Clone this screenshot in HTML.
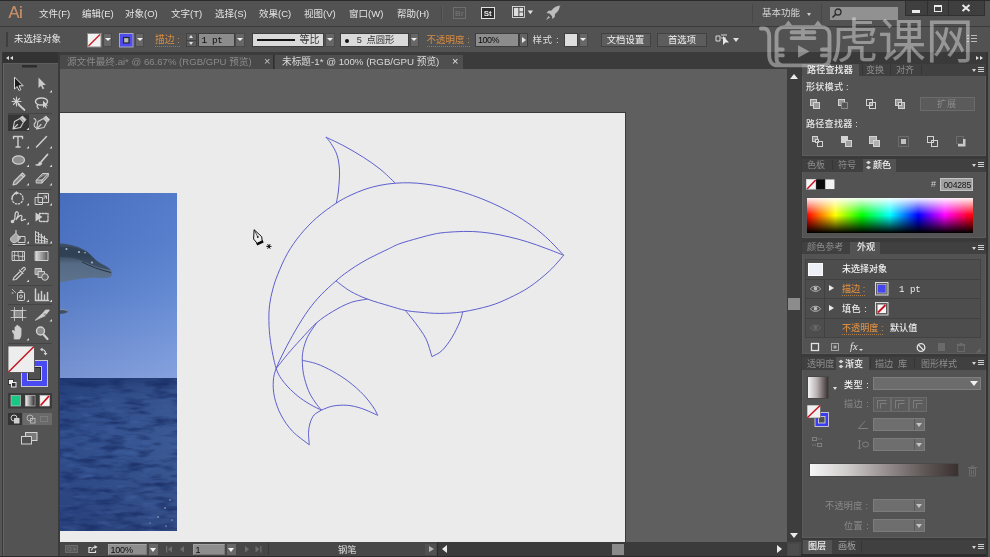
<!DOCTYPE html>
<html lang="zh-CN">
<head>
<meta charset="utf-8">
<title>Adobe Illustrator</title>
<style>
*{box-sizing:border-box;margin:0;padding:0}
html,body{width:990px;height:557px;overflow:hidden;background:#535353}body{will-change:transform}
body{position:relative;font-family:"Liberation Sans","Noto Sans CJK SC",sans-serif;font-size:11px;color:#dcdcdc;line-height:1}
.a{position:absolute}
.t{position:absolute;white-space:nowrap}
/* ---------- top bars ---------- */
#topline{left:0;top:0;width:990px;height:1px;background:#2b2b2b}
#menubar{left:0;top:1px;width:990px;height:25px;background:#525252}
#menuline{left:0;top:26px;width:990px;height:1px;background:#3a3a3a}
#ctrlbar{left:0;top:27px;width:990px;height:25px;background:#525252}
#tabrow{left:0;top:52px;width:990px;height:17px;background:#3b3b3b}
.mi{position:absolute;top:9px;font-size:9.5px;color:#e4e4e4;white-space:nowrap;letter-spacing:0}
.or{color:#d98d42;border-bottom:1px dotted rgba(217,141,66,.6)}
.dd{position:absolute;background:#676767;border:1px solid #4a4a4a}
.dd:after{content:"";position:absolute;left:50%;top:50%;margin:-1.500px 0 0 -3px;border:3px solid transparent;border-top:3.800px solid #f0f0f0;border-bottom:0}
/* ---------- canvas ---------- */
#canvas{left:60px;top:69px;width:727px;height:473px;background:#5f5f5f;overflow:hidden}
#artboard{left:0;top:44px;width:565px;height:430px;background:#ebebeb}
/* ---------- tools ---------- */
#toolhead{left:3px;top:52px;width:55px;height:10.500px;background:#333}
#tools{left:3px;top:62.500px;width:55px;height:493px;background:#535353;border-left:1px solid #626262;border-top:1px solid #5e5e5e}
/* ---------- right ---------- */
#vscroll{left:787px;top:69px;width:14px;height:473px;background:#3d3d3d}
#rpanel{left:801px;top:62px;width:185px;height:495px;background:#3b3b3b}
.pn{position:absolute;left:3px;width:179px;background:#535353}
.ptabs{position:absolute;left:3px;width:179px;height:14px;background:#424242}
.ptab{position:absolute;top:0;height:14px;font-size:10.5px;color:#9a9a9a;padding:2px 0 0 0;text-align:center}
.ptab.on{background:#535353;color:#efefef}
#status{left:60px;top:542px;width:741px;height:14px;background:#3f3f3f}
</style>
</head>
<body>
<div class="a" id="menubar"></div>
<div class="a" id="topline"></div>
<div class="a" id="menuline"></div>
<div class="a" id="ctrlbar"></div>
<div class="a" id="tabrow"></div>


<!-- ===== MENU BAR ===== -->
<div class="t" style="left:8.500px;top:3.500px;font-size:16.500px;color:#c08c68;letter-spacing:-0.6px;text-shadow:0 0 .6px #c08c68">Ai</div>
<div class="mi" style="left:39px">文件(F)</div>
<div class="mi" style="left:82px">编辑(E)</div>
<div class="mi" style="left:125px">对象(O)</div>
<div class="mi" style="left:171px">文字(T)</div>
<div class="mi" style="left:215px">选择(S)</div>
<div class="mi" style="left:259px">效果(C)</div>
<div class="mi" style="left:304px">视图(V)</div>
<div class="mi" style="left:349px">窗口(W)</div>
<div class="mi" style="left:397px">帮助(H)</div>
<div class="a" style="left:441px;top:6px;width:1px;height:15px;background:#484848"></div>
<div class="a" style="left:442px;top:6px;width:1px;height:15px;background:#5c5c5c"></div>
<div class="t" style="left:453px;top:6.500px;width:13px;height:12.500px;border:1px solid #6e6e6e;font-size:8px;font-weight:bold;color:#6e6e6e;text-align:center;line-height:11px">Br</div>
<div class="t" style="left:481px;top:6.500px;width:13.500px;height:12.500px;border:1px solid #e2e2e2;background:#2e2e2e;font-size:8px;font-weight:bold;color:#e8e8e8;text-align:center;line-height:11px">St</div>
<svg class="a" style="left:511.500px;top:6px" width="22" height="12.800" viewBox="0 0 24 14"><rect x="0.5" y="0.5" width="13" height="12" fill="#3a3a3a" stroke="#dedede"/><rect x="2" y="2" width="5" height="9" fill="#dedede"/><rect x="8" y="2" width="4" height="4" fill="#dedede"/><rect x="8" y="7" width="4" height="4" fill="#dedede"/><path d="M17 5h6l-3 4z" fill="#dedede"/></svg>
<svg class="a" style="left:544px;top:4px" width="18" height="18" viewBox="0 0 18 18"><path d="M16.5 1.5c-4 .2-7 2-9 5l-3 .3-2 2.300 3 .4 2.500 2.500.4 3 2.300-2 .3-3c3-2 4.800-5 5-9z" fill="#bdbdbd"/><path d="M4.500 12l-2.500 4 4-2.500z" fill="#bdbdbd"/></svg>
<div class="mi" style="left:762px;top:8px;color:#d6d6d6">基本功能</div>
<div class="a" style="left:807px;top:13px;border:2.5px solid transparent;border-top:3px solid #d0d0d0;border-bottom:0"></div>
<div class="a" style="left:752px;top:4px;width:1px;height:19px;background:#474747"></div>
<div class="a" style="left:821px;top:4px;width:1px;height:19px;background:#474747"></div>
<div class="a" style="left:830px;top:7px;width:67.500px;height:13px;background:#919191"></div>
<svg class="a" style="left:830px;top:7px" width="14" height="13" viewBox="0 0 14 13"><circle cx="8" cy="5" r="3" fill="none" stroke="#2c2c2c" stroke-width="1.300"/><path d="M5.800 7.200L2.500 10.500" stroke="#2c2c2c" stroke-width="1.600"/></svg>
<div class="a" style="left:905px;top:1px;width:79.500px;height:14.500px;background:#3f3f3f;border:1px solid #303030;border-top:0"></div>
<div class="a" style="left:926.500px;top:1px;width:1px;height:14px;background:#303030"></div>
<div class="a" style="left:948px;top:1px;width:1px;height:14px;background:#303030"></div>
<div class="a" style="left:912px;top:9.500px;width:8px;height:3px;background:#ececec"></div>
<div class="a" style="left:933.500px;top:5px;width:8.500px;height:7px;border:1.500px solid #ececec;border-top-width:2px"></div>
<svg class="a" style="left:961px;top:4px" width="10" height="8" viewBox="0 0 10 8"><path d="M1.500 1l7 6M8.500 1l-7 6" stroke="#ececec" stroke-width="1.900"/></svg>

<!-- ===== CONTROL BAR ===== -->
<div class="a" style="left:6px;top:32px;width:2px;height:15px;background:#3e3e3e"></div>
<div class="t" style="left:14px;top:34px;font-size:9.400px;color:#e6e6e6;letter-spacing:0">未选择对象</div>
<svg class="a" style="left:86.500px;top:32.500px" width="15" height="15" viewBox="0 0 15 15"><rect x="0.500" y="0.500" width="13.500" height="13.500" fill="#f2f2f2" stroke="#8a8a8a"/><path d="M1.500 13L13 1.500" stroke="#c8202a" stroke-width="1.500"/></svg>
<div class="dd" style="left:103px;top:32.500px;width:9px;height:14.500px"></div>
<svg class="a" style="left:118.500px;top:32.500px" width="15" height="15" viewBox="0 0 15 15"><rect x="0.500" y="0.500" width="13.500" height="13.500" fill="#4d4df2" stroke="#a8a8b8"/><rect x="4.500" y="4.500" width="5.500" height="5.500" fill="#b9b9b9" stroke="#26262a" stroke-width="1.200"/></svg>
<div class="dd" style="left:135px;top:32.500px;width:9px;height:14.500px"></div>
<div class="t or" style="left:155px;top:35px;font-size:9.700px;padding-bottom:1px">描边 :</div>
<div class="a" style="left:186px;top:32.500px;width:10.500px;height:14.500px;background:#5e5e5e;border:1px solid #424242"></div><div class="a" style="left:187px;top:39.500px;width:8.500px;height:1px;background:#424242"></div>
<div class="a" style="left:188.700px;top:34.500px;border:2.500px solid transparent;border-bottom:3.500px solid #e0e0e0;border-top:0"></div>
<div class="a" style="left:188.700px;top:42px;border:2.500px solid transparent;border-top:3.500px solid #e0e0e0;border-bottom:0"></div>
<div class="t" style="left:198px;top:32.500px;width:36.500px;height:14.500px;background:#8c8c8c;border:1px solid #3e3e3e;color:#0e0e0e;font-family:'Liberation Mono',monospace;font-size:9.300px;padding:2px 0 0 2.500px;letter-spacing:-.3px">1 pt</div>
<div class="dd" style="left:235px;top:32.500px;width:10px;height:14.500px"></div>
<div class="a" style="left:252px;top:32.500px;width:71.500px;height:14.500px;background:#dadada;border:1px solid #3e3e3e"></div>
<div class="a" style="left:257px;top:38.700px;width:37.500px;height:2.300px;background:#151515"></div>
<div class="t" style="left:299.500px;top:35px;font-size:10px;color:#3a3a3a">等比</div>
<div class="dd" style="left:324.500px;top:32.500px;width:10px;height:14.500px"></div>
<div class="a" style="left:340px;top:32.500px;width:69px;height:14.500px;background:#dadada;border:1px solid #3e3e3e"></div>
<div class="a" style="left:345px;top:39px;width:4px;height:4px;border-radius:2px;background:#111"></div>
<div class="t" style="left:356.500px;top:35.500px;font-size:9.300px;color:#333;font-family:'Liberation Mono','Noto Sans CJK SC',monospace">5</div><div class="t" style="left:366.500px;top:35.500px;font-size:9.300px;color:#333">点圆形</div>
<div class="dd" style="left:409.500px;top:32.500px;width:9.500px;height:14.500px"></div>
<div class="t or" style="left:426.500px;top:35px;font-size:9.500px;padding-bottom:1px">不透明度 :</div>
<div class="t" style="left:475px;top:32.500px;width:44px;height:14.500px;background:#8c8c8c;border:1px solid #3e3e3e;color:#0e0e0e;font-size:9px;padding:2px 0 0 2px;letter-spacing:-0.500px">100%</div>
<div class="a" style="left:519px;top:32.500px;width:9px;height:14.500px;background:#636363;border:1px solid #3e3e3e"></div>
<div class="a" style="left:522px;top:37px;border:3px solid transparent;border-left:4px solid #e6e6e6;border-right:0"></div>
<div class="t" style="left:532.500px;top:35px;font-size:9.500px;color:#dedede;letter-spacing:.6px">样式 :</div>
<div class="a" style="left:564px;top:32.500px;width:14px;height:14.500px;background:#dedede;border:1px solid #3e3e3e"></div>
<div class="dd" style="left:578.500px;top:32.500px;width:9.500px;height:14.500px"></div>
<div class="t" style="left:600.500px;top:32.500px;width:50px;height:14.500px;background:#5d5d5d;border:1px solid #414141;color:#f0f0f0;font-size:9.300px;text-align:center;padding-top:2px;letter-spacing:.1px">文档设置</div>
<div class="t" style="left:657px;top:32.500px;width:50px;height:14.500px;background:#5d5d5d;border:1px solid #414141;color:#f0f0f0;font-size:9.300px;text-align:center;padding-top:2px;letter-spacing:.1px">首选项</div>
<svg class="a" style="left:715px;top:32.500px" width="26" height="14" viewBox="0 0 26 14"><path d="M1 3h4v5h-4zM6 2h6M6 5h5" stroke="#d8d8d8" fill="none"/><path d="M8 3l0 9 2.500-2.500 3.500 0z" fill="#e8e8e8"/><path d="M18 5h6l-3 4z" fill="#dedede"/></svg>
<div class="a" style="left:967px;top:35px;width:2px;height:1px;background:#bbb;box-shadow:0 3px #bbb,0 6px #bbb,4px 0 #bbb,6px 0 #bbb,8px 0 #bbb,4px 3px #bbb,6px 3px #bbb,8px 3px #bbb,4px 6px #bbb,6px 6px #bbb,8px 6px #bbb"></div>

<!-- ===== TAB ROW ===== -->
<div class="a" style="left:60px;top:54.500px;width:214px;height:14.500px;background:#494949;border-right:1px solid #2f2f2f"></div>
<div class="t" style="left:67px;top:57px;font-size:9.600px;color:#8a8a8a">源文件最终.ai* @ 66.67% (RGB/GPU 预览)</div>
<div class="t" style="left:264px;top:55.500px;font-size:11px;color:#c4c4c4">×</div>
<div class="a" style="left:275px;top:54.500px;width:187.500px;height:14.500px;background:#4f4f4f"></div>
<div class="t" style="left:282px;top:57px;font-size:9.700px;color:#dadada">未标题-1* @ 100% (RGB/GPU 预览)</div>
<div class="t" style="left:452px;top:55.500px;font-size:11px;color:#e6e6e6">×</div>

<div class="a" id="canvas">
  <div class="a" style="left:0;top:43px;width:566px;height:431px;background:#3a3a3a"></div>
  <div class="a" id="artboard"></div>
  <!-- photo -->
  <div class="a" id="photo" style="left:0;top:124px;width:117px;height:338px;overflow:hidden;background:linear-gradient(90deg,rgba(0,0,50,.07),rgba(255,255,255,.04)),linear-gradient(180deg,#4c76c8 0,#527bcb 50px,#5d85d1 97px,#7193d8 147px,#819edd 185.500px,#1f3a76 185.500px,#27447f 192px,#2f4e8c 205px,#335391 250px,#2f4c89 300px,#29447f 338px)">
    <svg class="a" style="left:0;top:0" width="118" height="338" viewBox="60 193 118 338">
      <defs>
        <filter id="sea" x="0" y="0" width="100%" height="100%" color-interpolation-filters="sRGB"><feTurbulence type="fractalNoise" baseFrequency="0.040 0.160" numOctaves="3" seed="7"/><feColorMatrix type="matrix" values="0 0 0 0 0.100  0 0 0 0 0.180  0 0 0 0 0.400  0 0 0 2.400 -1.050"/></filter><filter id="sea2" x="0" y="0" width="100%" height="100%" color-interpolation-filters="sRGB"><feTurbulence type="fractalNoise" baseFrequency="0.050 0.200" numOctaves="2" seed="23"/><feColorMatrix type="matrix" values="0 0 0 0 0.250  0 0 0 0 0.370  0 0 0 0 0.630  0 0 0 2.000 -1.100"/></filter>
        <linearGradient id="dol" x1="0" y1="0" x2="0" y2="1"><stop offset="0" stop-color="#3e4e63"/><stop offset=".3" stop-color="#394a5f"/><stop offset=".52" stop-color="#556a84"/><stop offset="1" stop-color="#5d738e"/></linearGradient>
      </defs>
      <rect x="60" y="378.500" width="118" height="153" filter="url(#sea)" opacity=".9"/><rect x="60" y="390" width="118" height="141" filter="url(#sea2)"/>
      <path d="M60 243.500C70 244 80 247 87 251.500C91 254.500 94 258.500 97 261.500C101 264 107 267 110 269.500C112.800 271.500 112.800 276 109.500 277.500C104 278.500 96 277.500 88 278C78 278.500 68 281 60 282.500z" fill="url(#dol)"/>
      <path d="M60 247c8-1 20 1 27 5.500 5 4 9 8 14 11 4 2 8 4 10 6.500-8-1.500-18-4-26-8-8-4-17-5.500-25-5z" fill="#2c3a4c" opacity=".6"/>
      <path d="M82 262c8 4 18 8 29 10.500" stroke="#27323f" stroke-width="1" fill="none"/>
      <g fill="#cfdbe6" opacity=".8"><circle cx="66.500" cy="249" r="1"/><circle cx="79" cy="252" r="1.100"/><circle cx="85" cy="252.700" r=".8"/><circle cx="92" cy="262.500" r="1"/></g>
      <path d="M60 309.500c3-.5 6.500 0 8.500 2-2 1.500-5.500 2.500-8.500 2.500z" fill="#3f4f64"/><path d="M60 309.800c3-.5 6-.2 8 1.500" stroke="#9aa8b8" stroke-width=".8" fill="none"/>
      <g fill="#dfe6f2" opacity=".7"><circle cx="165" cy="508" r=".8"/><circle cx="170" cy="500" r=".7"/><circle cx="158" cy="517" r=".8"/><circle cx="172" cy="520" r=".7"/><circle cx="150" cy="523" r=".6"/><circle cx="166" cy="526" r=".7"/></g>
    </svg>
  </div>
  <svg class="a" style="left:-60px;top:-69px" width="990" height="557" viewBox="0 0 990 557"><g fill="none" stroke="#5656cc" stroke-width=".950">
<path d="M321.4 410.1C319.5 409.2 314.1 406.8 310.1 404.4C306.1 402.0 301.5 399.2 297.2 395.6C292.9 392.0 287.7 387.1 284.2 382.6C280.7 378.1 278.5 375.4 276.2 368.5C273.9 361.6 271.7 349.4 270.5 341.4C269.3 333.4 269.0 326.6 268.9 320.4C268.8 314.2 269.0 309.4 269.7 304.2C270.4 298.9 271.5 293.9 272.9 288.9C274.2 283.9 275.4 280.2 277.8 274.3C280.2 268.4 283.7 259.9 287.5 253.3C291.3 246.7 295.5 240.6 300.4 234.7C305.2 228.8 310.7 223.0 316.6 217.8C322.5 212.6 330.4 207.0 336.0 203.3C341.6 199.6 345.2 197.8 350.0 195.5C354.8 193.2 360.0 191.0 365.0 189.3C370.0 187.6 374.9 186.3 380.0 185.3C385.1 184.3 390.4 183.6 395.4 183.2C400.4 182.8 405.1 182.7 410.0 182.8C414.9 182.9 420.0 183.4 425.0 184.0C430.0 184.6 435.0 185.4 440.0 186.4C445.0 187.4 449.6 188.4 455.0 189.9C460.4 191.4 466.7 193.3 472.7 195.4C478.7 197.5 484.8 199.9 490.9 202.6C497.0 205.3 503.0 208.2 509.1 211.5C515.2 214.8 521.2 218.4 527.3 222.6C533.4 226.8 539.4 231.2 545.5 236.7C551.6 242.1 560.7 252.2 563.7 255.3"/>
<path d="M563.7 255.3C560.7 254.1 551.6 250.4 545.5 248.2C539.4 245.9 533.4 243.7 527.3 241.8C521.2 239.9 515.2 238.3 509.1 236.9C503.0 235.5 497.0 234.2 490.9 233.3C484.8 232.4 478.8 231.8 472.7 231.5C466.6 231.2 460.6 231.5 454.5 231.8C448.4 232.2 442.4 232.5 436.4 233.6C430.3 234.7 424.3 236.5 418.2 238.2C412.1 239.9 404.8 241.9 400.0 243.6C395.2 245.3 395.1 245.7 389.3 248.5C383.5 251.3 372.0 256.7 365.0 260.6C358.0 264.5 352.1 268.5 347.3 271.9C342.5 275.3 340.3 277.1 336.0 280.9C331.7 284.7 326.0 289.7 321.4 294.5C316.8 299.3 312.8 304.0 308.5 309.9C304.2 315.8 299.7 323.2 295.6 330.1C291.6 337.0 287.4 344.7 284.2 351.1C281.0 357.5 278.0 363.5 276.2 368.5C274.4 373.5 273.6 376.2 273.3 381.0C273.0 385.8 273.2 391.5 274.5 397.2C275.8 402.9 278.0 409.4 281.0 415.0C284.0 420.6 287.6 426.1 292.3 431.1C297.0 436.1 306.5 442.5 309.3 444.8"/>
<path d="M563.7 255.3C561.3 257.9 555.2 265.6 549.5 270.9C543.8 276.2 536.2 282.4 529.6 286.9C523.0 291.4 516.2 294.6 509.6 297.8C503.0 301.0 497.5 303.5 489.7 305.8C481.9 308.1 471.1 310.5 462.8 311.8C454.5 313.1 447.0 313.3 439.9 313.4C432.8 313.5 425.7 312.7 419.9 312.2C414.1 311.7 410.4 311.4 405.3 310.4C400.2 309.3 395.6 307.8 389.3 305.9C383.0 304.0 374.0 301.5 367.5 299.1C361.0 296.7 355.8 294.3 350.5 291.3C345.2 288.3 338.4 282.6 336.0 280.9"/>
<path d="M367.5 299.1C364.7 299.7 356.3 300.5 350.5 302.6C344.7 304.7 338.3 308.1 332.7 311.5C327.1 314.9 322.0 318.1 316.6 322.8C311.2 327.5 305.2 334.6 300.4 339.8C295.5 345.1 291.5 349.5 287.5 354.3C283.5 359.1 278.1 366.1 276.2 368.5"/>
<path d="M316.6 322.8C315.1 325.1 309.9 332.2 307.7 336.6C305.5 341.1 304.2 345.6 303.3 349.5C302.4 353.4 302.2 356.1 302.3 360.3C302.4 364.5 302.6 369.4 303.6 374.5C304.6 379.6 306.6 386.1 308.5 390.7C310.4 395.3 312.9 398.8 315.0 402.0C317.1 405.2 320.3 408.8 321.4 410.1"/>
<path d="M302.3 360.3C304.7 360.9 311.5 362.0 316.6 363.8C321.7 365.6 327.3 368.3 332.7 371.3C338.1 374.3 343.8 377.9 348.9 381.8C354.0 385.7 359.4 390.5 363.4 394.7C367.4 398.9 370.7 403.5 373.1 406.9C375.5 410.3 376.9 413.9 377.7 415.3"/>
<path d="M321.4 410.1C323.3 409.4 328.4 406.9 332.7 406.1C337.0 405.3 342.4 404.9 347.3 405.3C352.2 405.7 356.7 406.8 361.8 408.5C366.9 410.2 375.1 414.2 377.7 415.3"/>
<path d="M309.3 444.8C309.2 442.8 308.4 436.3 308.5 432.7C308.6 429.1 309.2 425.9 310.1 423.0C311.0 420.1 312.2 417.1 314.1 415.0C316.0 412.9 320.2 410.9 321.4 410.1"/>
<path d="M336.3 203.0C336.7 200.8 338.0 195.5 338.5 190.0C339.0 184.5 339.8 176.0 339.5 170.2C339.2 164.4 338.4 159.4 337.0 155.0C335.6 150.6 332.9 146.5 331.0 143.5C329.1 140.5 326.8 138.2 325.9 137.1"/>
<path d="M325.9 137.1C329.1 138.7 338.8 143.1 345.0 146.5C351.2 149.9 357.6 153.6 363.4 157.3C369.2 161.1 374.7 164.7 380.0 169.0C385.3 173.3 392.8 180.8 395.4 183.2"/>
<path d="M405.3 310.4C407.1 312.6 412.5 319.0 415.9 323.7C419.3 328.4 423.2 333.2 425.9 338.7C428.6 344.2 430.9 353.6 431.9 356.6"/>
<path d="M431.9 356.6C433.6 355.6 438.6 353.9 441.9 350.7C445.2 347.5 448.8 342.5 451.8 337.7C454.8 332.9 458.0 326.1 459.8 321.8C461.6 317.5 462.3 313.5 462.8 311.8"/>
</g></svg>
  <!-- pen cursor -->
  <svg class="a" style="left:190px;top:157px" width="24" height="24" viewBox="250 226 24 24"><path d="M254.100 229.700L261.700 236.700L262.200 241L257.300 243.600L253.600 239z" fill="#ededed" stroke="#111" stroke-width="1"/><path d="M256.700 244.300L263.200 241.300" stroke="#0a0a0a" stroke-width="2.400"/><circle cx="257.800" cy="237" r=".9" fill="#111"/><path d="M254.300 230l3.300 6.500" stroke="#111" stroke-width=".7"/><path d="M266.300 246.400h5.200M267.600 244.100l2.600 4.600M270.200 244.100l-2.600 4.600" stroke="#111" stroke-width="1"/></svg>
</div>

<div class="a" style="left:58px;top:52px;width:2px;height:505px;background:#3a3a3a"></div>
<div class="a" id="toolhead"></div>
<div class="a" style="left:6px;top:55.500px;border:2.500px solid transparent;border-right:3.500px solid #e0e0e0;border-left:0"></div><div class="a" style="left:9.500px;top:55.500px;border:2.500px solid transparent;border-right:3.500px solid #e0e0e0;border-left:0"></div>
<div class="a" style="left:0;top:52px;width:2px;height:505px;background:#555"></div><div class="a" style="left:2px;top:52px;width:1px;height:505px;background:#393939"></div>
<div class="a" id="tools"></div>

<!-- ===== TOOLS PANEL ===== -->
<svg class="a" style="left:0;top:60px" width="60" height="400" viewBox="0 60 60 400">
<g fill="none" stroke="#cfcfcf" stroke-width="1.200" stroke-linecap="round" stroke-linejoin="round">
<rect x="22" y="65" width="15" height="2.500" fill="#2d2d2d" stroke="none"/>
<!-- row1: selection / direct selection -->
<path d="M14.500 77.500v11.500l2.700-2.500 1.800 4 1.800-.8-1.800-3.900h3.800z" fill="#1b1b1b" stroke="#dcdcdc" stroke-width="1"/>
<path d="M38.500 77.500v10.500l2.500-2.300 1.700 3.600 1.500-.7-1.700-3.500h3.400z" fill="#c9c9c9" stroke="none"/>
<!-- row2: magic wand / lasso -->
<path d="M18.500 104.500l6 5.500" stroke-width="1.700"/><path d="M16.500 97v9M12 101.500h9M13.500 98.500l6 6M19.500 98.500l-6 6" stroke-width="1.100"/>
<ellipse cx="41.500" cy="101.500" rx="6" ry="3.600" stroke-width="1.500"/><path d="M38 104.500c-1.500 1.500-1 3 .5 4" stroke-width="1.300"/><path d="M43 100.500v7.500l1.800-1.700 1.200 2.300 1-.5-1.200-2.300h2.300z" fill="#cfcfcf" stroke="none"/>
<!-- row3: pen (active) / curvature -->
<rect x="8" y="114.500" width="21" height="16.500" fill="#363636" stroke="none"/>
<path d="M13 129l1.500-7.500 5.500-3 3.500 3.500-3 5.500zM13 129l4.500-4.500" stroke-width="1.100"/><path d="M20.500 117.500l2-1.500 3.500 3.500-1.500 2z" fill="#cfcfcf" stroke-width=".8"/>
<path d="M36.500 129l1.500-7.500 5.500-3 3.500 3.500-3 5.500zM36.500 129l4.500-4.500" stroke-width="1.100"/><path d="M44 117.500l2-1.500 3.500 3.500-1.500 2z" fill="#cfcfcf" stroke-width=".8"/><path d="M34 118.500c2.500 1 2.500 3 1 4.500s-1 3.500.5 4.500" stroke-width="1.100"/>
<!-- row4: type / line -->
<path d="M13.500 138.500v-2h9v2M18 136.500v10.500M16 147h4" stroke-width="1.400"/>
<path d="M36.500 147l10-10.500" stroke-width="1.500"/>
<!-- row5: ellipse / brush -->
<ellipse cx="18.500" cy="160" rx="6" ry="4.200" fill="#8e8e8e" stroke-width="1.200"/>
<path d="M47.500 154.500l-6.500 7.500" stroke-width="1.800"/><path d="M36 165c2-.3 3-1.500 3.500-3l2.500 1.500c-.8 1.800-3 2.500-6 1.500z" fill="#cfcfcf" stroke-width=".8"/>
<!-- row6: pencil / eraser -->
<path d="M13 185l1-3.500 7-7 2.500 2.500-7 7zM21 174.500l1.500-1.500 2.500 2.500-1.500 1.500" stroke-width="1.100" fill="#8a8a8a"/>
<path d="M36.500 180l6-6.500h6l-.5 3-6 6.500h-5.500zM36.500 180h5.500l6-6.500M42 180v3" stroke-width="1" fill="#8a8a8a"/>
<!-- row7: rotate / scale -->
<circle cx="17.500" cy="198.500" r="5.500" stroke-dasharray="1.300 1.800" stroke-width="1.300"/><path d="M12 198.500a5.500 5.500 0 0 1 5.500-5.500" stroke-width="1.300"/><path d="M17 191l-2.800 2 2.800 2z" fill="#cfcfcf" stroke="none"/>
<rect x="35.500" y="197.500" width="7" height="7" stroke-width="1"/><rect x="38.500" y="193.500" width="10" height="9" stroke-width="1"/><path d="M44 196h2.500v2.500M46.500 196l-3 3" stroke-width="1"/>
<!-- row8: warp / free transform -->
<path d="M12 222c2-1 3-3 3-6s1-5 2.500-4 0 5-1.500 7.500c2-2.500 4-5 5.500-4s-1 4 0 5 2.500-2 4-1" stroke-width="1.300"/><circle cx="12.500" cy="221.500" r="1.200" fill="#cfcfcf"/>
<rect x="39.500" y="213.500" width="8.500" height="8" stroke-dasharray="1.500 1.300" stroke-width="1.300"/><path d="M35.500 212.500v9l7-4.500z" fill="#cfcfcf" stroke="none"/>
<!-- row9: shape builder / perspective grid -->
<path d="M16 233.500l4.500 4.500-3.500 3.500c-1.500 1.500-4 1.500-5.500 0s-1-3.500 0-4.500z" fill="#a8a8a8" stroke-width="1"/><path d="M16 233.500v-3" stroke-width="1.200"/><rect x="18.500" y="236.500" width="6.500" height="6" stroke-width="1"/><path d="M13 244.500h12" stroke-width="1.200"/>
<path d="M35.500 231.500v11.500h12M38.500 232.500v10M41.500 234v9M44.500 236v7M35.500 235.500l12 4M35.500 239.500l12 2M35.500 231.500l12 8.500" stroke-width="1"/>
<!-- row10: mesh / gradient -->
<rect x="12.500" y="251.500" width="12" height="9" stroke-width="1"/><path d="M12.500 256c4-2 8 2 12 0M18.500 251.500c-2 3 2 6 0 9M14.500 251.500c1 3-1 6 0 9M22.500 251.500c1 3-1 6 0 9" stroke-width=".9"/>
<rect x="35.500" y="251.500" width="12.500" height="9" fill="url(#tg)" stroke-width="1"/>
<!-- row11: eyedropper / blend -->
<path d="M13 280l1-2.500 6.500-6.500 2 2-6.500 6.500zM19.500 270l3.500 3.500M21.500 269.500l2-2c.8-.8 2.500 1 1.700 1.800l-2 2" stroke-width="1.100"/>
<rect x="35.500" y="268.500" width="6" height="6" fill="#9a9a9a" stroke-width="1"/><rect x="38.500" y="271.500" width="6" height="6" fill="#777" stroke-width="1"/><circle cx="45" cy="277" r="3.300" fill="#666" stroke-width="1"/>
<!-- row12: symbol sprayer / graph -->
<rect x="17.500" y="292.500" width="7" height="8" rx="1" stroke-width="1"/><circle cx="21" cy="296.500" r="1.500" stroke-width="1"/><path d="M20 292.500v-2h2v2M12.500 289.500l1 1M14.500 291.500l1 1M12 293h1" stroke-width="1"/>
<path d="M35.500 289v11.500h13M38.500 300v-6M41.500 300v-8.500M44.500 300v-5M47.500 300v-7.500" stroke-width="1.500"/>
<!-- row13: artboard / slice -->
<rect x="14.500" y="310.500" width="8" height="7" fill="#8a8a8a" stroke-width="1"/><path d="M11 310.500h15M11 317.500h15M14.500 307.500v13M22.500 307.500v13" stroke-width=".8"/>
<path d="M35.500 320l7-6.500 2.500 2zM43 313l2.500-3h4l-3 4z" fill="#cfcfcf" stroke-width=".8"/>
<!-- row14: hand / zoom -->
<path d="M14 334c-1-1.500-2-3-1.500-3.500s2 .5 2.500 1.500v-4.500c0-1 1.500-1 1.500 0v-1.500c0-1 1.500-1 1.500 0v1c0-1 1.500-1 1.500 0v1.500c0-1 1.500-1 1.500 0v6c0 2-1 3.500-1.500 4.500h-5z" fill="#cfcfcf" stroke-width=".8"/>
<circle cx="40.500" cy="331" r="4" fill="#8c8c8c" stroke-width="1.400"/><path d="M43.500 334.500l4 4.500" stroke-width="2.200"/>
</g>
<defs><linearGradient id="tg"><stop offset="0" stop-color="#e0e0e0"/><stop offset="1" stop-color="#555"/></linearGradient>
<linearGradient id="tg2"><stop offset="0" stop-color="#f2f2f2"/><stop offset="1" stop-color="#2a2a2a"/></linearGradient></defs>
<!-- corner triangles -->
<g fill="#d8d8d8">
<path d="M52 90v2.500h-2.500z"/><path d="M29 127.500v2.500h-2.500z"/>
<path d="M29 146v2.500h-2.500zM52 146v2.500h-2.500z"/><path d="M29 164.500v2.500h-2.500zM52 164.500v2.500h-2.500z"/>
<path d="M29 183v2.500h-2.500zM52 183v2.500h-2.500z"/><path d="M29 203v2.500h-2.500zM52 203v2.500h-2.500z"/>
<path d="M29 222v2.500h-2.500z"/><path d="M29 241v2.500h-2.500zM52 241v2.500h-2.500z"/>
<path d="M29 279.500v2.500h-2.500z"/><path d="M29 299.500v2.500h-2.500zM52 299.500v2.500h-2.500z"/>
<path d="M52 319v2.500h-2.500z"/><path d="M29 338v2.500h-2.500z"/>
</g>
<!-- separators -->
<g stroke="#444" stroke-width="1"><path d="M8 113.500h44M8 189.500h44M8 245.500h44M8 285.500h44M8 304.500h44M8 343.500h44"/></g>
<!-- fill / stroke -->
<rect x="21.500" y="360.500" width="26" height="26" fill="#4a4af2" stroke="#c9c9c9"/>
<rect x="27.500" y="366.500" width="14" height="14" fill="#505050" stroke="#d0d0d0"/><rect x="28.500" y="367.500" width="12" height="12" fill="none" stroke="#2a2a2a"/>
<rect x="8" y="346" width="26.500" height="26.500" fill="#ededed" stroke="#4a4a4a" stroke-width=".8"/>
<path d="M8.500 372L34 346.500" stroke="#c0101c" stroke-width="1.500"/>
<g fill="none" stroke="#d6d6d6" stroke-width="1.200"><path d="M41.500 349.500c2.500 0 4 1.500 4 4"/><path d="M40 349.500l2.500-2v4zM45.500 355.500l-2-2.500h4z" fill="#d6d6d6" stroke="none"/></g>
<rect x="8.500" y="379.500" width="5" height="5" fill="#f0f0f0" stroke="#222" stroke-width=".8"/><rect x="11.500" y="382.500" width="4.500" height="4.500" fill="#333" stroke="#eee" stroke-width="1"/>
<!-- color mode -->
<rect x="8" y="393" width="44" height="15.500" fill="#3a3a3a"/>
<rect x="11" y="395.500" width="9.500" height="10.500" fill="#19c784" stroke="#cfcfcf" stroke-width=".6"/>
<rect x="25.500" y="395.500" width="9.500" height="10.500" fill="url(#tg2)" stroke="#cfcfcf" stroke-width=".6"/>
<rect x="40" y="395.500" width="9.500" height="10.500" fill="#f4f4f4" stroke="#cfcfcf" stroke-width=".6"/><path d="M40.500 405.500L49 396" stroke="#d01020" stroke-width="1.800"/>
<!-- draw mode -->
<rect x="8" y="413" width="14" height="12" fill="#343434"/><rect x="22.500" y="413" width="29.500" height="12" fill="#6a6a6a"/>
<g fill="none" stroke="#d0d0d0" stroke-width="1"><circle cx="14" cy="418" r="3"/><rect x="14.500" y="418.500" width="4.500" height="4.500" fill="#cfcfcf"/><circle cx="30" cy="418" r="3" stroke="#b5b5b5"/><rect x="30.500" y="418.500" width="4.500" height="4.500" stroke="#b5b5b5"/><rect x="40.500" y="416.500" width="7" height="5" stroke="#7c7c7c"/></g>
<!-- screen mode -->
<rect x="25.500" y="432.500" width="11.500" height="8" fill="#7a7a7a" stroke="#d4d4d4"/><rect x="21.500" y="436.500" width="10" height="7.500" fill="#505050" stroke="#d4d4d4"/>
</svg>

<!-- ===== STATUS BAR / SCROLLBARS ===== -->
<div class="a" style="left:60px;top:542px;width:741px;height:13.5px;background:#474747;"></div>
<div class="a" style="left:437px;top:542px;width:350px;height:13.5px;background:#3b3b3b;"></div>
<div class="a" style="left:0px;top:555.5px;width:990px;height:1.5px;background:#2c2c2c;"></div>
<svg class="a" style="left:64px;top:544px" width="36" height="10" viewBox="64 544 36 10"><g fill="none" stroke="#6c6c6c" stroke-width="1"><rect x="65.500" y="545.500" width="12" height="7" fill="#5a5a5a"/><circle cx="69.500" cy="549" r="1.800"/><path d="M73 549h3M74.500 547.500v3"/></g><g fill="none" stroke="#e0e0e0" stroke-width="1.200"><path d="M91.500 547.500h-2.500v5h6.500v-2"/><path d="M91.500 550.500c.5-2.500 2-3.500 4-3.500"/><path d="M94.500 545l3 2-3 2z" fill="#e0e0e0" stroke="none"/></g></svg>
<div class="t" style="left:108px;top:544px;width:39px;height:11px;background:#8e8e8e;border:1px solid #a2a2a2;border-right-color:#777;border-bottom-color:#777;color:#0c0c0c;font-size:9px;padding:.5px 0 0 1.500px;letter-spacing:-.2px">100%</div>
<div class="a" style="left:148.5px;top:544px;width:9.5px;height:11px;background:#686868;"></div>
<div class="a" style="left:150px;top:548px;border:3px solid transparent;border-top:4px solid #f0f0f0;border-bottom:0"></div>
<svg class="a" style="left:164px;top:545px" width="100" height="9" viewBox="164 545 100 9"><g fill="#6e6e6e"><rect x="166" y="546" width="1.300" height="6.500"/><path d="M172 546v6.500l-4-3.250z"/><path d="M184 546v6.500l-4-3.250z"/><path d="M245 546v6.500l4-3.250z"/><path d="M255.500 546v6.500l4-3.250z"/><rect x="260.200" y="546" width="1.300" height="6.500"/></g></svg>
<div class="t" style="left:193px;top:544px;width:32px;height:11px;background:#8e8e8e;border:1px solid #a2a2a2;border-right-color:#777;border-bottom-color:#777;color:#0c0c0c;font-size:9px;padding:.5px 0 0 1.500px">1</div>
<div class="a" style="left:226.5px;top:544px;width:9.5px;height:11px;background:#686868;"></div>
<div class="a" style="left:228px;top:548px;border:3px solid transparent;border-top:4px solid #f0f0f0;border-bottom:0"></div>
<div class="a" style="left:268px;top:543px;width:1px;height:12px;background:#3a3a3a;"></div>
<div class="t" style="left:338px;top:546px;font-size:9.3px;color:#dedede;">钢笔</div>
<div class="a" style="left:424.5px;top:543.5px;width:11.5px;height:11.5px;background:#515151;"></div>
<div class="a" style="left:428.500px;top:546px;border:3.500px solid transparent;border-left:5px solid #b4b4b4;border-right:0"></div>
<div class="a" style="left:436.5px;top:542px;width:1.5px;height:13.5px;background:#2c2c2c;"></div>
<div class="a" style="left:442px;top:545px;border:4px solid transparent;border-right:5.500px solid #ececec;border-left:0"></div>
<div class="a" style="left:777px;top:545px;border:4px solid transparent;border-left:5.500px solid #ececec;border-right:0"></div>
<div class="a" style="left:612px;top:543.5px;width:12px;height:11px;background:#8a8a8a;"></div>
<div class="a" style="left:787.5px;top:543.5px;width:11.5px;height:11px;background:#4d4d4d;"></div>
<div class="a" style="left:787px;top:69px;width:14px;height:473px;background:#3d3d3d;"></div>
<div class="a" style="left:789.500px;top:73.500px;border:4.500px solid transparent;border-bottom:5px solid #ececec;border-top:0"></div>
<div class="a" style="left:789.500px;top:533px;border:4.500px solid transparent;border-top:5px solid #ececec;border-bottom:0"></div>
<div class="a" style="left:788px;top:298px;width:11.5px;height:11.5px;background:#8c8c8c;"></div>
<!-- ===== RIGHT PANELS ===== -->
<div class="a" style="left:801px;top:53px;width:189px;height:504px;background:#3a3a3a;"></div>
<div class="a" style="left:976px;top:55.500px;border:2.500px solid transparent;border-left:3.500px solid #e0e0e0;border-right:0"></div><div class="a" style="left:979.500px;top:55.500px;border:2.500px solid transparent;border-left:3.500px solid #e0e0e0;border-right:0"></div>
<div class="a" style="left:802px;top:64px;width:183.500px;height:12px;background:#404040;"></div>
<div class="a" style="left:802px;top:64px;width:57px;height:12px;background:#535353;"></div>
<div class="t" style="left:807px;top:65.5px;font-size:9.1px;color:#f0f0f0;font-weight:500;letter-spacing:.1px">路径查找器</div>
<div class="a" style="left:862px;top:65px;width:1px;height:10px;background:#353535;"></div>
<div class="a" style="left:890px;top:65px;width:1px;height:10px;background:#353535;"></div>
<div class="a" style="left:921px;top:65px;width:1px;height:10px;background:#353535;"></div>
<div class="t" style="left:866px;top:65.5px;font-size:9.1px;color:#8e8e8e;">变换</div>
<div class="t" style="left:896px;top:65.5px;font-size:9.1px;color:#8e8e8e;">对齐</div>
<div class="a" style="left:972px;top:69px;border:2.500px solid transparent;border-top:3px solid #d4d4d4;border-bottom:0"></div><div class="a" style="left:977.500px;top:67px;width:6px;height:1px;background:#cfcfcf;box-shadow:0 2px #cfcfcf,0 4px #cfcfcf"></div>
<div class="a" style="left:802px;top:76px;width:183.500px;height:79.5px;background:#535353;border:1px solid #5c5c5c;border-top:0"></div>
<div class="t" style="left:806px;top:82.5px;font-size:9.1px;color:#e6e6e6;font-weight:500;letter-spacing:.2px">形状模式 :</div>
<div class="t" style="left:806px;top:119.5px;font-size:9.1px;color:#e6e6e6;font-weight:500;letter-spacing:.2px">路径查找器 :</div>
<div class="t" style="left:919.500px;top:97px;width:55px;height:14px;background:#5b5b5b;border:1px solid #6b6b6b;color:#8c8c8c;font-size:9.100px;text-align:center;padding-top:1.500px;letter-spacing:1px">扩展</div>
<svg class="a" style="left:802px;top:94px" width="184" height="58" viewBox="802 94 184 58"><g fill="none" stroke="#d2d2d2" stroke-width="1">
<rect x="810.500" y="99.500" width="6" height="6" fill="#9a9a9a"/><rect x="813.500" y="102.500" width="6" height="6" fill="#9a9a9a"/>
<rect x="838.500" y="99.500" width="6" height="6" fill="#9a9a9a"/><rect x="841.500" y="102.500" width="6" height="6" fill="#555" stroke="#8a8a8a"/>
<rect x="866.500" y="99.500" width="6" height="6"/><rect x="869.500" y="102.500" width="6" height="6"/><rect x="869.500" y="102.500" width="3" height="3" fill="#9a9a9a"/>
<rect x="895.500" y="99.500" width="6" height="6" fill="#9a9a9a"/><rect x="898.500" y="102.500" width="6" height="6" fill="#9a9a9a"/><rect x="898.500" y="102.500" width="3" height="3" fill="#555"/>
<rect x="812.500" y="136.500" width="5" height="5" fill="#8a8a8a"/><rect x="815.500" y="139.500" width="3" height="3" fill="#555"/><rect x="817.500" y="141.500" width="5" height="5"/>
<rect x="841.500" y="136.500" width="6" height="6" fill="#d2d2d2"/><rect x="845.500" y="140.500" width="6" height="6" fill="#a0a0a0"/>
<rect x="869.500" y="136.500" width="7" height="7" fill="#b0b0b0"/><rect x="873.500" y="140.500" width="6" height="6" fill="#b0b0b0"/>
<rect x="898.500" y="136.500" width="10" height="10" stroke="#6c6c6c"/><rect x="901" y="139" width="5" height="5" fill="#c0c0c0" stroke="none"/>
<rect x="927.500" y="136.500" width="6" height="6"/><rect x="931.500" y="140.500" width="6" height="6"/>
<rect x="956.500" y="136.500" width="7" height="7" stroke="#6c6c6c"/><path d="M965.500 139v7.500h-7.500v-2.500h5v-5z" fill="#c8c8c8" stroke="none"/>
</g></svg>
<div class="a" style="left:802px;top:159px;width:183.500px;height:12.5px;background:#404040;"></div>
<div class="a" style="left:863px;top:159px;width:33px;height:12.5px;background:#535353;"></div>
<div class="t" style="left:807px;top:160.5px;font-size:9.1px;color:#8e8e8e;">色板</div>
<div class="a" style="left:832px;top:160px;width:1px;height:10px;background:#353535;"></div>
<div class="t" style="left:838px;top:160.5px;font-size:9.1px;color:#8e8e8e;">符号</div>
<div class="t" style="left:866px;top:160px;font-size:5px;color:#d8d8d8;transform:scaleY(.7);line-height:6px">◆</div>
<div class="t" style="left:866px;top:165px;font-size:5px;color:#d8d8d8;transform:scaleY(.7);line-height:6px">◆</div>
<div class="t" style="left:873px;top:160.5px;font-size:9.1px;color:#f0f0f0;font-weight:500">颜色</div>
<div class="a" style="left:972px;top:164px;border:2.500px solid transparent;border-top:3px solid #d4d4d4;border-bottom:0"></div><div class="a" style="left:977.500px;top:162px;width:6px;height:1px;background:#cfcfcf;box-shadow:0 2px #cfcfcf,0 4px #cfcfcf"></div>
<div class="a" style="left:802px;top:171.5px;width:183.500px;height:66.5px;background:#535353;border:1px solid #5c5c5c;border-top:0"></div>
<svg class="a" style="left:806px;top:179px" width="29.500" height="10.500" viewBox="0 0 32 11.500"><rect x=".5" y=".5" width="10" height="10.500" fill="#f6f6f6" stroke="#ddd"/><path d="M1 11L10.500 1" stroke="#d01020" stroke-width="1.600"/><rect x="11" y=".5" width="9.500" height="10.500" fill="#0c0c0c"/><rect x="21" y=".5" width="10" height="10.500" fill="#f2f2f2"/></svg>
<div class="t" style="left:931px;top:180px;font-size:9px;color:#d0d0d0;font-weight:500">#</div>
<div class="t" style="left:940px;top:177.500px;width:32.500px;height:13.500px;background:#a2a2a2;border:1px solid #c4c4c4;color:#161616;font-size:8.600px;padding:2px 0 0 2.500px;letter-spacing:-.2px">004285</div>
<div class="a" style="left:807px;top:198px;width:165.500px;height:34.500px;background:linear-gradient(180deg,rgba(255,255,255,.95) 0,rgba(255,255,255,0) 48%,rgba(0,0,0,0) 50%,rgba(0,0,0,1) 100%),linear-gradient(90deg,#f00 0,#ff0 17%,#0f0 33%,#0ff 50%,#00f 67%,#f0f 83%,#f00 100%)"></div>
<div class="a" style="left:802px;top:241.5px;width:183.500px;height:12.5px;background:#404040;"></div>
<div class="a" style="left:850px;top:241.5px;width:30px;height:12.5px;background:#535353;"></div>
<div class="t" style="left:807px;top:243px;font-size:9.1px;color:#8e8e8e;">颜色参考</div>
<div class="t" style="left:857px;top:243px;font-size:9.1px;color:#f0f0f0;font-weight:500">外观</div>
<div class="a" style="left:972px;top:246.5px;border:2.500px solid transparent;border-top:3px solid #d4d4d4;border-bottom:0"></div><div class="a" style="left:977.500px;top:244.5px;width:6px;height:1px;background:#cfcfcf;box-shadow:0 2px #cfcfcf,0 4px #cfcfcf"></div>
<div class="a" style="left:802px;top:254px;width:183.500px;height:100px;background:#535353;border:1px solid #5c5c5c;border-top:0"></div>
<div class="a" style="left:805px;top:259px;width:176px;height:79px;background:#4d4d4d;border:1px solid #424242"></div>
<div class="a" style="left:805px;top:278.500px;width:176px;height:1px;background:#414141;"></div>
<div class="a" style="left:805px;top:298px;width:176px;height:1px;background:#414141;"></div>
<div class="a" style="left:805px;top:317.500px;width:176px;height:1px;background:#414141;"></div>
<div class="a" style="left:824px;top:279px;width:1px;height:59px;background:#414141;"></div>
<div class="a" style="left:808px;top:262.5px;width:14.5px;height:13.5px;background:#eeeef6;border:1px solid #fafafa"></div>
<div class="t" style="left:842px;top:264.5px;font-size:9px;color:#f2f2f2;font-weight:500">未选择对象</div>
<svg class="a" style="left:810px;top:285.0px;opacity:0.8" width="11" height="7.600" viewBox="0 0 13 9"><path d="M.5 4.500C3 .5 10 .5 12.500 4.500C10 8.500 3 8.500 .5 4.500z" fill="none" stroke="#d6d6d6" stroke-width="1.100"/><circle cx="6.500" cy="4.300" r="2.100" fill="#d6d6d6"/></svg>
<svg class="a" style="left:810px;top:304.5px;opacity:0.8" width="11" height="7.600" viewBox="0 0 13 9"><path d="M.5 4.500C3 .5 10 .5 12.500 4.500C10 8.500 3 8.500 .5 4.500z" fill="none" stroke="#d6d6d6" stroke-width="1.100"/><circle cx="6.500" cy="4.300" r="2.100" fill="#d6d6d6"/></svg>
<svg class="a" style="left:810px;top:324.0px;opacity:0.22" width="11" height="7.600" viewBox="0 0 13 9"><path d="M.5 4.500C3 .5 10 .5 12.500 4.500C10 8.500 3 8.500 .5 4.500z" fill="none" stroke="#d6d6d6" stroke-width="1.100"/><circle cx="6.500" cy="4.300" r="2.100" fill="#d6d6d6"/></svg>
<div class="a" style="left:829px;top:285px;border:3.500px solid transparent;border-left:5.500px solid #ececec;border-right:0"></div>
<div class="a" style="left:829px;top:304.500px;border:3.500px solid transparent;border-left:5.500px solid #ececec;border-right:0"></div>
<div class="t" style="left:842px;top:284.500px;font-size:9.1px;color:#d98d42;border-bottom:1px dotted rgba(217,141,66,.7);padding-bottom:1px;font-weight:500">描边 :</div>
<svg class="a" style="left:875px;top:282px" width="14" height="14" viewBox="0 0 14 14"><rect x=".5" y=".5" width="12.500" height="12.500" fill="#5c5c5c" stroke="#d9d9d9"/><rect x="2.500" y="2.500" width="8.500" height="8.500" fill="#4646f0" stroke="#c8c8c8" stroke-width=".6"/></svg>
<div class="t" style="left:899px;top:285px;font-size:9.1px;color:#ececec;font-family:'Liberation Mono',monospace;font-weight:500">1 pt</div>
<div class="t" style="left:842px;top:304.500px;font-size:9.1px;color:#ececec;font-weight:500;letter-spacing:.5px">填色 :</div>
<svg class="a" style="left:875px;top:301.700px" width="14" height="14" viewBox="0 0 14 14"><rect x=".5" y=".5" width="12.500" height="12.500" fill="#5c5c5c" stroke="#d9d9d9"/><rect x="2.500" y="2.500" width="8.500" height="8.500" fill="#f6f6f6"/><path d="M3 10.500L10.500 3" stroke="#d01020" stroke-width="1.800"/></svg>
<div class="t" style="left:842px;top:323.500px;font-size:9.1px;color:#d98d42;border-bottom:1px dotted rgba(217,141,66,.7);padding-bottom:1px;font-weight:500">不透明度 :</div>
<div class="t" style="left:890px;top:323.500px;font-size:9.1px;color:#ececec;font-weight:500">默认值</div>
<svg class="a" style="left:805px;top:340px" width="176" height="14" viewBox="805 340 176 14"><g fill="none" stroke="#e2e2e2" stroke-width="1.300">
<rect x="811.500" y="343.500" width="7" height="7"/>
<rect x="831.500" y="343.500" width="7" height="7" stroke="#a8a8a8" stroke-width="1"/><rect x="833.500" y="345.500" width="3" height="3" fill="#a8a8a8" stroke="none"/>
<circle cx="921" cy="347.500" r="3.800"/><path d="M918.300 344.800l5.400 5.400"/>
<g stroke="#6a6a6a" stroke-width="1"><rect x="938.500" y="343.500" width="6" height="7" fill="#6a6a6a"/><path d="M957.500 345.500h7v6h-7zM956.500 344.500h9M959.500 343.500h3"/></g>
<path d="M976 352.500l4.500-4.500v4.500z" fill="#6a6a6a" stroke="none"/>
</g></svg>
<div class="t" style="left:850px;top:341.5px;font-size:10.5px;color:#e6e6e6;font-style:italic;font-family:'Liberation Serif',serif;font-weight:500">fx</div>
<div class="a" style="left:859px;top:349px;border:2px solid transparent;border-top:2.500px solid #e0e0e0;border-bottom:0"></div>
<div class="a" style="left:802px;top:357px;width:183.500px;height:12.5px;background:#404040;"></div>
<div class="a" style="left:836px;top:357px;width:32.5px;height:12.5px;background:#535353;"></div>
<div class="t" style="left:807px;top:359.500px;font-size:9.1px;color:#8e8e8e;">透明度</div>
<div class="t" style="left:838.5px;top:359px;font-size:5px;color:#d8d8d8;transform:scaleY(.7);line-height:6px">◆</div>
<div class="t" style="left:838.5px;top:364px;font-size:5px;color:#d8d8d8;transform:scaleY(.7);line-height:6px">◆</div>
<div class="t" style="left:845px;top:359.500px;font-size:9.1px;color:#f0f0f0;font-weight:500">渐变</div>
<div class="a" style="left:870px;top:358px;width:1px;height:10px;background:#353535;"></div>
<div class="a" style="left:914px;top:358px;width:1px;height:10px;background:#353535;"></div>
<div class="t" style="left:875px;top:359.500px;font-size:9.1px;color:#8e8e8e;">描边</div>
<div class="t" style="left:898px;top:359.500px;font-size:9.1px;color:#8e8e8e;">库</div>
<div class="t" style="left:921px;top:359.500px;font-size:9px;color:#8e8e8e;">图形样式</div>
<div class="a" style="left:972px;top:362px;border:2.500px solid transparent;border-top:3px solid #d4d4d4;border-bottom:0"></div><div class="a" style="left:977.500px;top:360px;width:6px;height:1px;background:#cfcfcf;box-shadow:0 2px #cfcfcf,0 4px #cfcfcf"></div>
<div class="a" style="left:802px;top:369.5px;width:183.500px;height:168.5px;background:#535353;border:1px solid #5c5c5c;border-top:0"></div>
<div class="a" style="left:806.5px;top:376px;width:22.5px;height:22.5px;background:linear-gradient(90deg,#f4f4f4 0,#b8b0b0 45%,#3a3232 100%);border:1px solid #484848"></div>
<div class="a" style="left:833px;top:387px;border:2.500px solid transparent;border-top:3px solid #e0e0e0;border-bottom:0"></div>
<div class="t" style="left:844px;top:380.5px;font-size:9.1px;color:#f0f0f0;font-weight:500;letter-spacing:.5px">类型 :</div>
<div class="a" style="left:872.5px;top:376.5px;width:108.5px;height:13.5px;background:#6c6c6c;border:1px solid #7e7e7e"></div>
<div class="a" style="left:969.500px;top:381px;border:4px solid transparent;border-top:5px solid #f0f0f0;border-bottom:0"></div>
<div class="t" style="left:844px;top:399.5px;font-size:9.1px;color:#8a8a8a;letter-spacing:.5px">描边 :</div>
<div class="a" style="left:873px;top:397px;width:17.5px;height:14.5px;background:#5c5c5c;border:1px solid #6c6c6c"></div>
<svg class="a" style="left:877px;top:400px" width="10" height="9" viewBox="0 0 10 9"><path d="M.5 8.500v-8h9M3.500 8.500v-5h6" fill="none" stroke="#7e7e7e" stroke-width="1"/></svg>
<div class="a" style="left:891px;top:397px;width:17.5px;height:14.5px;background:#5c5c5c;border:1px solid #6c6c6c"></div>
<svg class="a" style="left:895px;top:400px" width="10" height="9" viewBox="0 0 10 9"><path d="M.5 8.500v-8h9M3.500 8.500v-5h6" fill="none" stroke="#7e7e7e" stroke-width="1"/></svg>
<div class="a" style="left:909px;top:397px;width:17.5px;height:14.5px;background:#5c5c5c;border:1px solid #6c6c6c"></div>
<svg class="a" style="left:913px;top:400px" width="10" height="9" viewBox="0 0 10 9"><path d="M.5 8.500v-8h9M3.500 8.500v-5h6" fill="none" stroke="#7e7e7e" stroke-width="1"/></svg>
<svg class="a" style="left:805px;top:403px" width="26" height="46" viewBox="805 403 26 46">
<rect x="815" y="412.500" width="13.500" height="14" fill="#3c3cf0" stroke="#e0e0e0" stroke-width=".8"/><rect x="818.500" y="416.500" width="6.500" height="6.500" fill="#505050" stroke="#e0e0e0" stroke-width=".8"/>
<rect x="807" y="405" width="13.500" height="13" fill="#f0f0f0" stroke="#555" stroke-width=".6"/><path d="M807.300 417.700L820.300 405.300" stroke="#c8101c" stroke-width="1.400"/>
<g fill="none" stroke="#808080" stroke-width="1"><rect x="812.500" y="437.500" width="4" height="3"/><rect x="817.500" y="443.500" width="4" height="3"/><path d="M818 439h4M812 445h4" stroke-dasharray="1.500 1"/></g>
</svg>
<div class="a" style="left:872.5px;top:418px;width:52px;height:13px;background:#6e6e6e;border:1px solid #7c7c7c"></div><div class="a" style="left:913.5px;top:419px;width:1px;height:11px;background:#5a5a5a;"></div><div class="a" style="left:916px;top:422.5px;border:3px solid transparent;border-top:4px solid #c4c4c4;border-bottom:0"></div>
<div class="a" style="left:872.5px;top:438px;width:52px;height:13px;background:#6e6e6e;border:1px solid #7c7c7c"></div><div class="a" style="left:913.5px;top:439px;width:1px;height:11px;background:#5a5a5a;"></div><div class="a" style="left:916px;top:442.5px;border:3px solid transparent;border-top:4px solid #c4c4c4;border-bottom:0"></div>
<div class="a" style="left:872.5px;top:499px;width:52px;height:13px;background:#6e6e6e;border:1px solid #7c7c7c"></div><div class="a" style="left:913.5px;top:500px;width:1px;height:11px;background:#5a5a5a;"></div><div class="a" style="left:916px;top:503.5px;border:3px solid transparent;border-top:4px solid #c4c4c4;border-bottom:0"></div>
<div class="a" style="left:872.5px;top:519px;width:52px;height:13px;background:#6e6e6e;border:1px solid #7c7c7c"></div><div class="a" style="left:913.5px;top:520px;width:1px;height:11px;background:#5a5a5a;"></div><div class="a" style="left:916px;top:523.5px;border:3px solid transparent;border-top:4px solid #c4c4c4;border-bottom:0"></div>
<svg class="a" style="left:856px;top:419px" width="14" height="32" viewBox="856 419 14 32"><g fill="none" stroke="#808080" stroke-width="1"><path d="M858.500 428.500h9.500M858.500 428.500l6.500-7.500"/><path d="M859.500 440v9M858 441.500l1.500-1.500 1.500 1.500M858 447.500l1.500 1.500 1.500-1.500"/><ellipse cx="865.500" cy="444.500" rx="3" ry="2.500"/></g></svg>
<div class="a" style="left:809px;top:463px;width:150px;height:13.5px;background:linear-gradient(90deg,#f6f6f6 0,#d0cccc 25%,#9a9292 50%,#5e5555 78%,#3a3030 100%);border:1px solid #4a4a4a"></div>
<svg class="a" style="left:967px;top:465px" width="11" height="12" viewBox="0 0 11 12"><path d="M2.500 3.500h6v7.500h-6zM1 2.500h9M4 1h3M4.500 5v4.500M6.500 5v4.500" fill="none" stroke="#6e6e6e" stroke-width="1"/></svg>
<div class="t" style="left:825px;top:501.5px;font-size:9.1px;color:#8a8a8a;letter-spacing:.3px">不透明度 :</div>
<div class="t" style="left:844px;top:521.5px;font-size:9.1px;color:#8a8a8a;letter-spacing:.5px">位置 :</div>
<div class="a" style="left:802px;top:540px;width:183.500px;height:14px;background:#404040;"></div>
<div class="a" style="left:803px;top:540px;width:29px;height:14px;background:#535353;"></div>
<div class="t" style="left:808px;top:542px;font-size:9.1px;color:#f0f0f0;font-weight:500">图层</div>
<div class="t" style="left:838px;top:542px;font-size:9.1px;color:#a0a0a0;">画板</div>
<div class="a" style="left:861px;top:541px;width:1px;height:12px;background:#353535;"></div>
<div class="a" style="left:972px;top:546px;border:2.500px solid transparent;border-top:3px solid #d4d4d4;border-bottom:0"></div><div class="a" style="left:977.500px;top:544px;width:6px;height:1px;background:#cfcfcf;box-shadow:0 2px #cfcfcf,0 4px #cfcfcf"></div>
<div class="a" style="left:801px;top:554px;width:189px;height:3px;background:#2e2e2e;"></div>

<div class="a" style="left:985.500px;top:52px;width:2px;height:505px;background:#343434"></div><div class="a" style="left:987.500px;top:52px;width:2.500px;height:505px;background:#555"></div>
<!-- ===== WATERMARK ===== -->
<svg class="a" style="left:755px;top:15px" width="90" height="60" viewBox="0 0 836 557"><g opacity=".4"><g fill="none" stroke="#fff" stroke-width="36" stroke-linecap="round" stroke-linejoin="round">
<path d="M55 125H85C115 125 132 160 132 210V380C132 430 160 468 210 468H630C670 468 692 440 692 400V185C692 140 660 113 620 113H270C225 113 200 140 200 185V400C200 440 220 462 250 468"/>
<path d="M340 160H552M340 215H552M445 133V215"/>
<path d="M215 320H258M215 375H258M622 320H675M622 375H675"/>
</g><g fill="#fff"><path d="M272 100L310 50L348 100zM547 100L585 50L623 100z"/><path d="M400 280V396L506 338z"/></g></g></svg>
<div class="t" id="wm" style="left:830.500px;top:14.500px;font-size:48px;line-height:54px;letter-spacing:-.400px;color:rgba(255,255,255,.40);font-family:'Liberation Sans','Noto Sans CJK SC',sans-serif;font-weight:400">虎课网</div>
</body>
</html>
